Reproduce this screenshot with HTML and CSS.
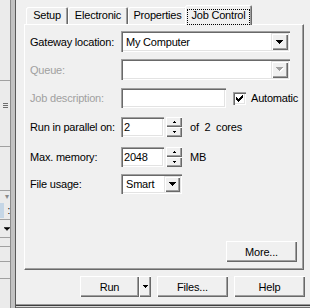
FILE: index.html
```html
<!DOCTYPE html>
<html lang="en">
<head>
  <meta charset="UTF-8" />
  <title>Job Control</title>
  <link rel="stylesheet" href="styles.css">
</head>
<body>
  <div class="window">
    <!-- trozo de la ventana de al lado -->
    <div class="side">
      <div class="pane pane-top"></div>
      <div class="pane pane-grip"><span class="grip"></span></div>
      <div class="pane pane-mid"></div>
      <div class="pane pane-combo"><span class="mini-arrow">&#9662;</span></div>
      <div class="pane pane-sel"><span class="sel"></span><span class="colon">:</span></div>
      <div class="pane pane-drop">
        <svg width="7" height="4" viewBox="0 0 7 4"><path d="M0 0h7v1H0zM1 1h5v1H1zM2 2h3v1H2zM3 3h1v1H3z" fill="#000"/></svg>
      </div>
      <div class="pane pane-row"></div>
      <div class="pane pane-row2"></div>
      <div class="pane pane-row3"></div>
      <div class="pane pane-rest"></div>
    </div>
    <div class="splitter"></div>

    <div class="dialog">
      <div class="tabs">
        <div class="tab tab-setup">Setup</div>
        <div class="tab tab-elec">Electronic</div>
        <div class="tab tab-prop">Properties</div>
        <div class="tab active"><span class="focus">Job Control</span></div>
      </div>

      <div class="panel">
        <div class="form">
          <div class="row tall">
            <label>Gateway location:</label>
            <div class="combo wide">
              <span class="value">My Computer</span>
              <span class="drop"><svg width="7" height="4" viewBox="0 0 7 4"><path d="M0 0h7v1H0zM1 1h5v1H1zM2 2h3v1H2zM3 3h1v1H3z" fill="#000"/></svg></span>
            </div>
          </div>

          <div class="row tall">
            <label class="disabled">Queue:</label>
            <div class="combo wide off">
              <span class="value"></span>
              <span class="drop"><svg width="8" height="5" viewBox="0 0 8 5"><path d="M1 1h7v1H1zM2 2h5v1H2zM3 3h3v1H3zM4 4h1v1H4z" fill="#fff"/><path d="M0 0h7v1H0zM1 1h5v1H1zM2 2h3v1H2zM3 3h1v1H3z" fill="#a0a0a0"/></svg></span>
            </div>
          </div>

          <div class="row row-desc">
            <label class="disabled">Job description:</label>
            <div class="field desc"></div>
            <span class="check">
              <svg width="7" height="7" viewBox="0 0 7 7"><path d="M0 2h1v3H0zM1 3h1v3H1zM2 4h1v3H2zM3 3h1v3H3zM4 2h1v3H4zM5 1h1v3H5zM6 0h1v3H6z" fill="#000"/></svg>
            </span>
            <span class="check-label">Automatic</span>
          </div>

          <div class="row row-par">
            <label>Run in parallel on:</label>
            <div class="field num">2</div>
            <div class="spin">
              <span class="spin-btn"><svg width="3" height="2" viewBox="0 0 3 2"><path d="M1 0h1v1H1zM0 1h3v1H0z" fill="#000"/></svg></span>
              <span class="spin-btn"><svg width="3" height="2" viewBox="0 0 3 2"><path d="M0 0h3v1H0zM1 1h1v1H1z" fill="#000"/></svg></span>
            </div>
            <span class="unit">of&nbsp; 2&nbsp; cores</span>
          </div>

          <div class="row row-mem">
            <label>Max. memory:</label>
            <div class="field num">2048</div>
            <div class="spin">
              <span class="spin-btn"><svg width="3" height="2" viewBox="0 0 3 2"><path d="M1 0h1v1H1zM0 1h3v1H0z" fill="#000"/></svg></span>
              <span class="spin-btn"><svg width="3" height="2" viewBox="0 0 3 2"><path d="M0 0h3v1H0zM1 1h1v1H1z" fill="#000"/></svg></span>
            </div>
            <span class="unit">MB</span>
          </div>

          <div class="row">
            <label>File usage:</label>
            <div class="combo small">
              <span class="value">Smart</span>
              <span class="drop"><svg width="7" height="4" viewBox="0 0 7 4"><path d="M0 0h7v1H0zM1 1h5v1H1zM2 2h3v1H2zM3 3h1v1H3z" fill="#000"/></svg></span>
            </div>
          </div>
        </div>

        <button class="btn more">More...</button>
      </div>

      <div class="actions">
        <div class="split">
          <button class="btn run">Run</button>
          <button class="btn run-arrow"><svg width="5" height="3" viewBox="0 0 5 3"><path d="M0 0h5v1H0zM1 1h3v1H1zM2 2h1v1H2z" fill="#000"/></svg></button>
        </div>
        <button class="btn wide-btn">Files...</button>
        <button class="btn wide-btn">Help</button>
      </div>

      <div class="frame-bottom"></div>
    </div>
  </div>
</body>
</html>
```

FILE: styles.css
```css
body {
  margin: 0;
  font-family: "Liberation Sans", Arial, sans-serif;
  font-size: 11px;
  letter-spacing: -0.2px;
  color: #000;
  background-color: #f0f0f0;
}

.window {
  display: flex;
  width: 310px;
  height: 308px;
  overflow: hidden;
}

/* ventana vecina (solo se ve un borde) */
.side {
  width: 10px;
  flex-shrink: 0;
  display: flex;
  flex-direction: column;
  background-color: #ebebeb;
}

.pane {
  border-top: 1px solid #a0a0a0;
  display: flex;
  align-items: center;
}

.pane-top {
  height: 80px;
  border-top: none;
}

.pane-grip {
  height: 65px;
  align-items: flex-start;
}

.grip {
  width: 5px;
  height: 5px;
  margin: 22px 0 0 3px;
  background: repeating-linear-gradient(#6d6d6d 0 1px, transparent 1px 2px);
}

.pane-mid {
  height: 43px;
}

.pane-combo {
  height: 11px;
  justify-content: flex-end;
}

.mini-arrow {
  font-size: 8px;
  color: #8a8a8a;
  margin-right: 1px;
}

.pane-sel {
  height: 17px;
  border-top: none;
}

.sel {
  width: 5px;
  height: 15px;
  background-color: #c5d6e6;
}

.colon {
  margin-left: 3px;
  font-size: 10px;
}

.pane-drop {
  height: 17px;
  padding-left: 4px;
}

.pane-row {
  height: 8px;
}

.pane-row2 {
  height: 14px;
}

.pane-row3 {
  height: 16px;
}

.pane-rest {
  flex: 1;
}

.splitter {
  width: 6px;
  flex-shrink: 0;
  background-color: #c2c2c2;
  box-shadow: inset 1px 0 #8c8c8c, inset -1px 0 #595959;
}

/* dialogo */
.dialog {
  flex: 1;
  min-width: 0;
  display: flex;
  flex-direction: column;
  padding: 5px 5px 0 8px;
}

.tabs {
  display: flex;
  align-items: flex-end;
  height: 19px;
  padding-left: 2px;
}

.tab {
  box-sizing: border-box;
  flex-shrink: 0;
  height: 17px;
  line-height: 16px;
  text-align: center;
  background-color: #f0f0f0;
  border-radius: 2px 2px 0 0;
  box-shadow: inset 1px 1px #fff, inset -1px 0 #696969, inset -2px 0 #a0a0a0;
}

.tab-setup { width: 42px; }
.tab-elec { width: 60px; }
.tab-prop { width: 59px; }

.tab.active {
  position: relative;
  z-index: 1;
  width: 67px;
  height: 20px;
  padding-top: 2px;
  margin: 0 -2px -1px;
}

.focus {
  display: inline-block;
  border: 1px dotted #000;
  line-height: 11px;
  padding: 0 3px 3px;
}

.panel {
  box-sizing: border-box;
  height: 246px;
  margin-right: 1px;
  display: flex;
  flex-direction: column;
  padding: 6px 6px 7px 5px;
  border-top: 1px solid #fff;
  border-left: 1px solid #fff;
  border-right: 1px solid #696969;
  border-bottom: 1px solid #696969;
  box-shadow: inset -1px -1px #a0a0a0;
}

.form {
  display: flex;
  flex-direction: column;
  gap: 7px;
}

.row {
  display: flex;
  align-items: center;
  height: 20px;
}

.row.tall {
  height: 21px;
}

.row-desc { margin-top: 1px; }
.row-par { margin-top: 2px; }
.row-mem { margin-top: 3px; }

.row label {
  width: 91px;
  flex-shrink: 0;
}

.disabled {
  color: #a0a0a0;
}

.field,
.combo,
.check {
  box-sizing: border-box;
  flex-shrink: 0;
  background-color: #fff;
  box-shadow: inset 1px 1px #a0a0a0, inset 2px 2px #696969, inset -1px -1px #fff, inset -2px -2px #e3e3e3;
}

.field {
  height: 20px;
  line-height: 20px;
  padding-left: 3px;
}

.desc { width: 105px; }
.num { width: 43px; }

.combo {
  display: flex;
  align-items: center;
  height: 100%;
  padding: 2px;
}

.combo.wide { width: 169px; }
.combo.small { width: 61px; }

.combo .value {
  flex: 1;
  padding-left: 3px;
}

.drop {
  width: 17px;
  height: 100%;
  display: flex;
  align-items: center;
  justify-content: center;
  background-color: #f0f0f0;
  box-shadow: inset 1px 1px #e3e3e3, inset 2px 2px #fff, inset -1px -1px #696969, inset -2px -2px #a0a0a0;
}

.small .drop {
  width: 16px;
}

.check {
  width: 13px;
  height: 13px;
  margin-left: 7px;
  display: flex;
  align-items: center;
  justify-content: center;
}

.check-label {
  margin-left: 5px;
}

.spin {
  display: flex;
  flex-direction: column;
  flex-shrink: 0;
  width: 16px;
  height: 20px;
  margin-left: 2px;
}

.spin-btn {
  flex: 1;
  display: flex;
  align-items: center;
  justify-content: center;
  background-color: #f0f0f0;
  box-shadow: inset 1px 1px #fff, inset -1px -1px #696969, inset -2px -2px #a0a0a0;
}

.unit {
  margin-left: 8px;
  white-space: nowrap;
}

.btn {
  font-family: inherit;
  font-size: 11px;
  letter-spacing: inherit;
  color: #000;
  height: 21px;
  border: none;
  padding: 0;
  background-color: #f0f0f0;
  box-shadow: inset 1px 1px #fff, inset -1px -1px #696969, inset -2px -2px #a0a0a0;
}

.more {
  width: 71px;
  margin-top: auto;
  align-self: flex-end;
}

.actions {
  display: flex;
  justify-content: flex-end;
  gap: 6px;
  margin-top: 6px;
}

.split {
  display: flex;
}

.run { width: 59px; }

.run-arrow {
  width: 12px;
  display: flex;
  align-items: center;
  justify-content: center;
}

.wide-btn { width: 71px; }

.frame-bottom {
  margin: auto -5px 0 -8px;
  height: 4px;
  background: linear-gradient(#9a9a9a 0 1px, #3f3f3f 1px 2px, #d8d8d8 2px 3px, #707070 3px);
}
```
